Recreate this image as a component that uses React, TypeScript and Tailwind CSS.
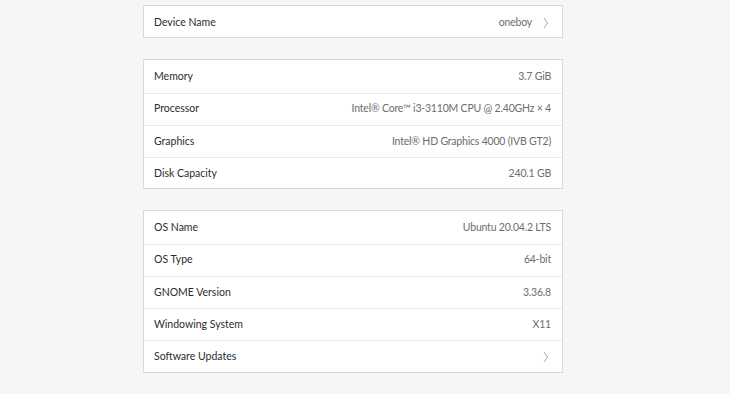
import React from 'react';

type Row = { label: string; value?: string; link?: boolean };

const groups: Row[][] = [
  [{ label: 'Device Name', value: 'oneboy', link: true }],
  [
    { label: 'Memory', value: '3.7 GiB' },
    { label: 'Processor', value: 'Intel® Core™ i3-3110M CPU @ 2.40GHz × 4' },
    { label: 'Graphics', value: 'Intel® HD Graphics 4000 (IVB GT2)' },
    { label: 'Disk Capacity', value: '240.1 GB' },
  ],
  [
    { label: 'OS Name', value: 'Ubuntu 20.04.2 LTS' },
    { label: 'OS Type', value: '64-bit' },
    { label: 'GNOME Version', value: '3.36.8' },
    { label: 'Windowing System', value: 'X11' },
    { label: 'Software Updates', link: true },
  ],
];

function Chevron() {
  return (
    <svg width="6" height="12" viewBox="0 0 6 12" className="ml-[11px] mr-[2px] text-[#a8a8a8]">
      <path d="M1 1 L4.5 6 L1 11" fill="none" stroke="currentColor" strokeWidth="1" />
    </svg>
  );
}

function Panel({ rows }: { rows: Row[] }) {
  return (
    <div className="bg-white border border-[#d8d8d8] divide-y divide-[#ececec]">
      {rows.map((r) => (
        <div
          key={r.label}
          className="box-content h-[31.25px] flex items-center justify-between pl-[10px] pr-[11px] pt-[1px] -mb-[1px]"
        >
          <span className="text-[#2a2e30]">{r.label}</span>
          <div className="flex items-center">
            {r.value && <span className="text-[#6d6d6d] tracking-[-0.2px]">{r.value}</span>}
            {r.link && <Chevron />}
          </div>
        </div>
      ))}
    </div>
  );
}

export default function App() {
  return (
    <div
      className="min-h-screen bg-[#f6f6f6] pt-[5px] text-[10.5px]"
      style={{ fontFamily: 'Lato, "Noto Sans", sans-serif' }}
    >
      <div className="ml-[143px] w-[420px] flex flex-col gap-[21px]">
        {groups.map((g, i) => (
          <Panel key={i} rows={g} />
        ))}
      </div>
    </div>
  );
}
